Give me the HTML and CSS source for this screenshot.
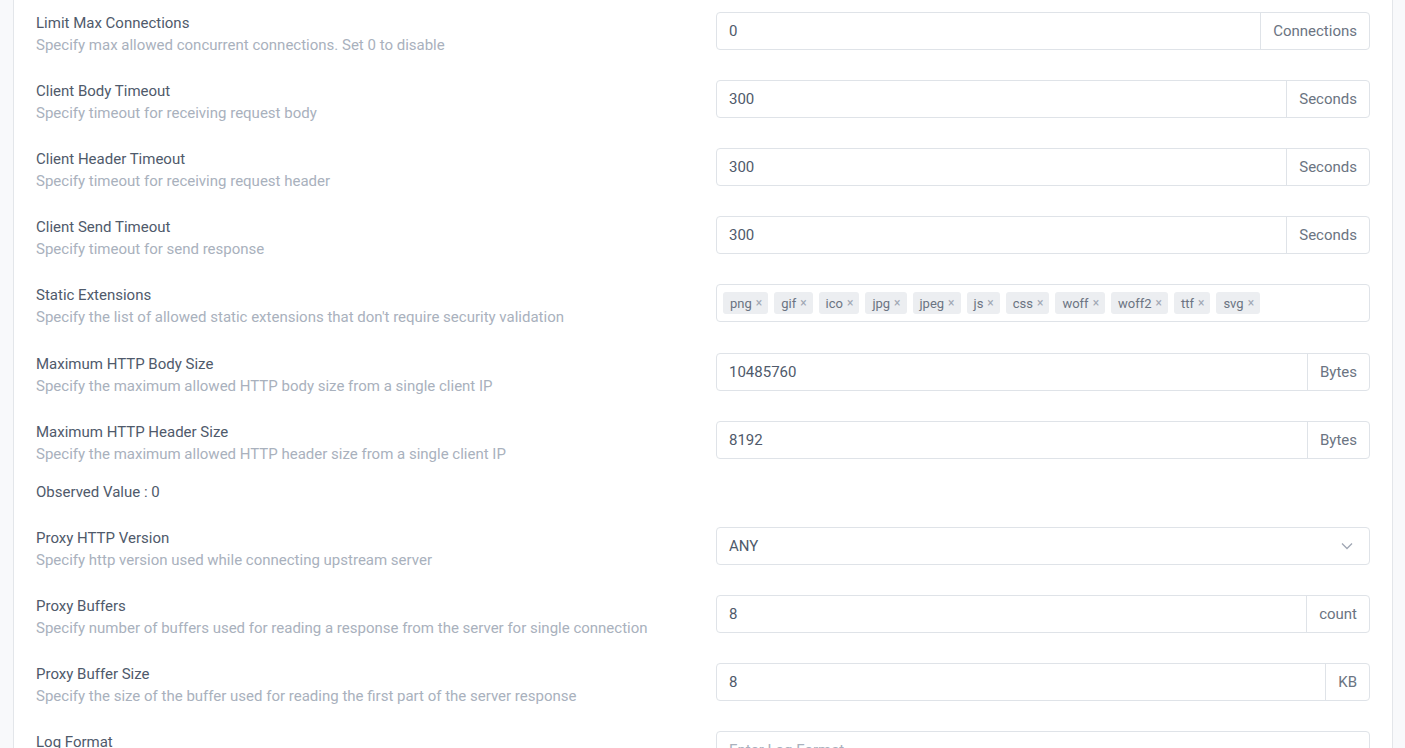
FILE: index.html
```html
<!DOCTYPE html>
<html lang="en">

<head>
    <meta charset="UTF-8">
    <meta name="viewport" content="width=device-width, initial-scale=1.0">
    <title>Server Settings</title>
    <link rel="stylesheet" href="styles.css">
</head>

<body>
    <div class="card">
        <div class="row">
            <div class="info">
                <div class="label">Limit Max Connections</div>
                <div class="desc">Specify max allowed concurrent connections. Set 0 to disable</div>
            </div>
            <div class="field">
                <div class="group">
                    <input class="control" type="text" value="0">
                    <span class="addon">Connections</span>
                </div>
            </div>
        </div>

        <div class="row">
            <div class="info">
                <div class="label">Client Body Timeout</div>
                <div class="desc">Specify timeout for receiving request body</div>
            </div>
            <div class="field">
                <div class="group">
                    <input class="control" type="text" value="300">
                    <span class="addon">Seconds</span>
                </div>
            </div>
        </div>

        <div class="row">
            <div class="info">
                <div class="label">Client Header Timeout</div>
                <div class="desc">Specify timeout for receiving request header</div>
            </div>
            <div class="field">
                <div class="group">
                    <input class="control" type="text" value="300">
                    <span class="addon">Seconds</span>
                </div>
            </div>
        </div>

        <div class="row">
            <div class="info">
                <div class="label">Client Send Timeout</div>
                <div class="desc">Specify timeout for send response</div>
            </div>
            <div class="field">
                <div class="group">
                    <input class="control" type="text" value="300">
                    <span class="addon">Seconds</span>
                </div>
            </div>
        </div>

        <div class="row row-tags">
            <div class="info">
                <div class="label">Static Extensions</div>
                <div class="desc">Specify the list of allowed static extensions that don't require security validation</div>
            </div>
            <div class="field">
                <div class="tags">
                    <span class="tag">png <i>×</i></span>
                    <span class="tag">gif <i>×</i></span>
                    <span class="tag">ico <i>×</i></span>
                    <span class="tag">jpg <i>×</i></span>
                    <span class="tag">jpeg <i>×</i></span>
                    <span class="tag">js <i>×</i></span>
                    <span class="tag">css <i>×</i></span>
                    <span class="tag">woff <i>×</i></span>
                    <span class="tag">woff2 <i>×</i></span>
                    <span class="tag">ttf <i>×</i></span>
                    <span class="tag">svg <i>×</i></span>
                </div>
            </div>
        </div>

        <div class="row">
            <div class="info">
                <div class="label">Maximum HTTP Body Size</div>
                <div class="desc">Specify the maximum allowed HTTP body size from a single client IP</div>
            </div>
            <div class="field">
                <div class="group">
                    <input class="control" type="text" value="10485760">
                    <span class="addon">Bytes</span>
                </div>
            </div>
        </div>

        <div class="row">
            <div class="info">
                <div class="label">Maximum HTTP Header Size</div>
                <div class="desc">Specify the maximum allowed HTTP header size from a single client IP</div>
                <div class="observed">Observed Value : 0</div>
            </div>
            <div class="field">
                <div class="group">
                    <input class="control" type="text" value="8192">
                    <span class="addon">Bytes</span>
                </div>
            </div>
        </div>

        <div class="row">
            <div class="info">
                <div class="label">Proxy HTTP Version</div>
                <div class="desc">Specify http version used while connecting upstream server</div>
            </div>
            <div class="field">
                <div class="select">
                    <span>ANY</span>
                    <svg width="12" height="8" viewBox="0 0 12 8"><path d="M1 1.5l5 5 5-5" fill="none" stroke="#a0a7b4" stroke-width="1.3"/></svg>
                </div>
            </div>
        </div>

        <div class="row">
            <div class="info">
                <div class="label">Proxy Buffers</div>
                <div class="desc">Specify number of buffers used for reading a response from the server for single connection</div>
            </div>
            <div class="field">
                <div class="group">
                    <input class="control" type="text" value="8">
                    <span class="addon">count</span>
                </div>
            </div>
        </div>

        <div class="row">
            <div class="info">
                <div class="label">Proxy Buffer Size</div>
                <div class="desc">Specify the size of the buffer used for reading the first part of the server response</div>
            </div>
            <div class="field">
                <div class="group">
                    <input class="control" type="text" value="8">
                    <span class="addon">KB</span>
                </div>
            </div>
        </div>

        <div class="row">
            <div class="info">
                <div class="label">Log Format</div>
            </div>
            <div class="field">
                <input class="control single" type="text" placeholder="Enter Log Format">
            </div>
        </div>
    </div>
</body>

</html>
```

FILE: styles.css
```css
* {
    margin: 0;
    padding: 0;
    box-sizing: border-box;
}

html,
body {
    height: 100%;
    overflow: hidden;
}

body {
    background-color: #f8f9fb;
    font-family: Roboto, "Liberation Sans", sans-serif;
    font-size: 15px;
    color: #4b5563;
    padding: 0 12px 0 13px;
}

.card {
    background-color: #fff;
    border-left: 1px solid #e3e6ea;
    border-right: 1px solid #e3e6ea;
    padding: 12px 22px 0 22px;
    min-height: 100%;
}

.row {
    display: grid;
    grid-template-columns: 680px 1fr;
    margin-bottom: 24px;
}

.row-tags {
    margin-bottom: 25px;
}

.label {
    line-height: 22px;
    color: #4f5a6b;
}

.desc {
    line-height: 22px;
    color: #a9b1bd;
}

.observed {
    margin-top: 16px;
    line-height: 22px;
    color: #4f5a6b;
}

.field {
    padding-top: 0;
}

.group {
    display: flex;
    height: 38px;
    border: 1px solid #dfe3e8;
    border-radius: 4px;
}

.control {
    flex: 1;
    min-width: 0;
    border: none;
    outline: none;
    background: transparent;
    padding: 0 12px;
    font-family: inherit;
    font-size: 15px;
    color: #4f5a6b;
}

.control.single {
    width: 100%;
    height: 38px;
    border: 1px solid #dfe3e8;
    border-radius: 4px;
}

.control::placeholder {
    color: #a9b1bd;
}

.addon {
    display: flex;
    align-items: center;
    padding: 0 12px;
    border-left: 1px solid #dfe3e8;
    color: #6b7482;
}

.tags {
    display: flex;
    align-items: center;
    gap: 6px;
    height: 38px;
    padding: 0 6px;
    border: 1px solid #dfe3e8;
    border-radius: 4px;
}

.tag {
    display: inline-flex;
    align-items: center;
    gap: 4px;
    height: 22px;
    padding: 0 6px 0 7px;
    background-color: #eceef1;
    border-radius: 3px;
    font-size: 13px;
    color: #6b7482;
}

.tag i {
    font-style: normal;
    font-size: 12px;
    color: #a0a7b4;
}

.select {
    display: flex;
    align-items: center;
    justify-content: space-between;
    height: 38px;
    padding: 0 16px 0 12px;
    border: 1px solid #dfe3e8;
    border-radius: 4px;
    color: #4f5a6b;
}
```
